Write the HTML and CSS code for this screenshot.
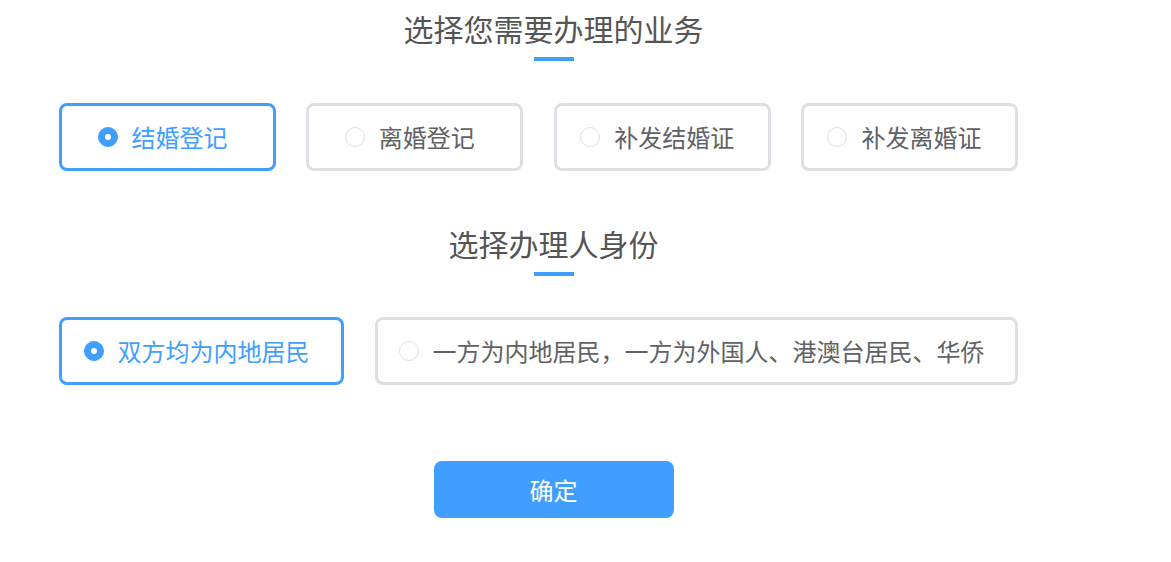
FILE: index.html
```html
<!DOCTYPE html>
<html lang="zh-CN">
<head>
<meta charset="utf-8">
<title>选择业务</title>
<link rel="stylesheet" href="styles.css">
</head>
<body>
<div class="page">
  <section class="block">
    <h2 class="section-title">选择您需要办理的业务</h2>
    <div class="title-bar"></div>
    <div class="options row-business">
      <label class="option is-checked"><span class="radio"></span><span class="label">结婚登记</span></label>
      <label class="option"><span class="radio"></span><span class="label">离婚登记</span></label>
      <label class="option"><span class="radio"></span><span class="label">补发结婚证</span></label>
      <label class="option"><span class="radio"></span><span class="label">补发离婚证</span></label>
    </div>
  </section>
  <section class="block block-second">
    <h2 class="section-title">选择办理人身份</h2>
    <div class="title-bar"></div>
    <div class="options row-identity">
      <label class="option option-short is-checked"><span class="radio"></span><span class="label">双方均为内地居民</span></label>
      <label class="option option-long"><span class="radio"></span><span class="label">一方为内地居民，一方为外国人、港澳台居民、华侨</span></label>
    </div>
  </section>
  <div class="actions">
    <button class="btn-confirm" type="button">确定</button>
  </div>
</div>
</body>
</html>
```

FILE: styles.css
```css
* {
  box-sizing: border-box;
}

html, body {
  margin: 0;
  padding: 0;
  background: #ffffff;
}

body {
  font-family: "Noto Sans CJK SC", "Noto Sans", sans-serif;
  color: #606266;
}

.page {
  width: 1107px;
  padding-top: 7px;
}

.block-second {
  margin-top: 51px;
}

.section-title {
  margin: 0;
  font-size: 30px;
  line-height: 43px;
  font-weight: 400;
  color: #555555;
  text-align: center;
}

.title-bar {
  width: 40px;
  height: 4px;
  margin: 7px auto 0;
  background: #409eff;
}

.options {
  display: flex;
  margin-left: 59px;
  width: 959px;
}

.row-business {
  margin-top: 42px;
  justify-content: space-between;
}

.row-identity {
  margin-top: 41px;
  gap: 31px;
}

.option {
  display: flex;
  align-items: center;
  justify-content: center;
  width: 217px;
  height: 68px;
  border: 3px solid #dcdfe6;
  border-radius: 8px;
  background: #ffffff;
  cursor: pointer;
}

.option-short {
  width: 285px;
}

.option-long {
  width: 643px;
}

.radio {
  position: relative;
  flex: none;
  width: 20px;
  height: 20px;
  border: 1px solid #dcdfe6;
  border-radius: 50%;
  background: #ffffff;
}

.label {
  margin-left: 14px;
  padding-right: 10px;
  font-size: 24px;
  line-height: 32px;
  color: #606266;
  white-space: nowrap;
}

.is-checked {
  border-color: #409eff;
}

.is-checked .radio {
  border-color: #409eff;
  background: #409eff;
}

.is-checked .radio::after {
  content: "";
  position: absolute;
  left: 50%;
  top: 50%;
  width: 6px;
  height: 6px;
  margin: -3px 0 0 -3px;
  border-radius: 50%;
  background: #ffffff;
}

.is-checked .label {
  color: #409eff;
}

.actions {
  display: flex;
  justify-content: center;
  margin-top: 76px;
}

.btn-confirm {
  width: 240px;
  height: 57px;
  border: none;
  border-radius: 8px;
  background: #409eff;
  color: #ffffff;
  font-family: "Noto Sans CJK SC", "Noto Sans", sans-serif;
  font-size: 24px;
  cursor: pointer;
}
```
